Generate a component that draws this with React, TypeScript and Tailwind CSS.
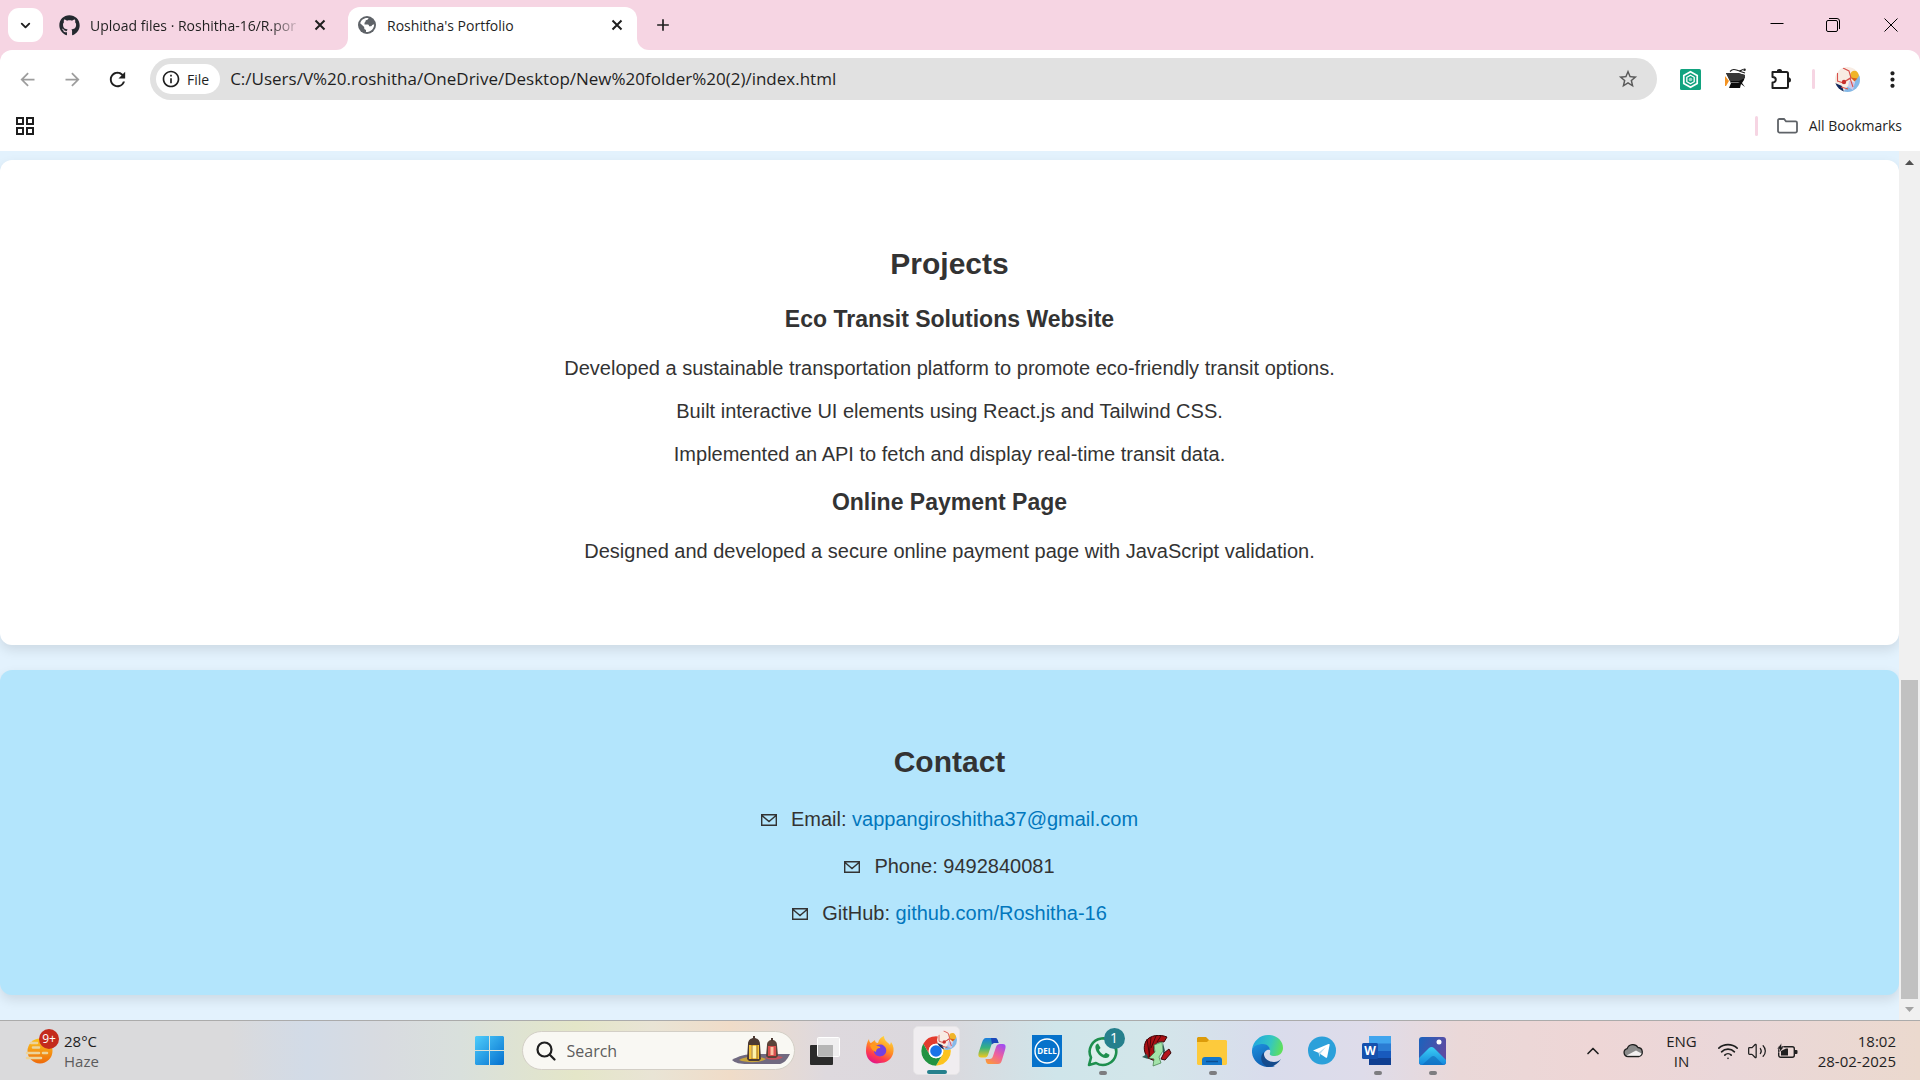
import React from "react";
import { ChevronDown, ChevronUp, Wifi, Volume2 } from "lucide-react";
import { FaGithub } from "react-icons/fa";
import {
  MdArrowBack,
  MdArrowForward,
  MdRefresh,
  MdOutlineInfo,
  MdStarBorder,
  MdMoreVert,
  MdAdd,
} from "react-icons/md";

function Cross() {
  return (
    <svg width="12" height="12" viewBox="0 0 12 12" stroke="#1f1f1f" strokeWidth="2">
      <path d="M1.500 1.500l9 9M10.500 1.500l-9 9" />
    </svg>
  );
}

function Globe() {
  return (
    <svg width="18" height="18" viewBox="0 0 18 18">
      <circle cx="9" cy="9" r="9" fill="#5f6368" />
      <path
        d="M10.500 2.100C10.500 3.600 9.300 4 7.800 4.200c-.5 1.300-.2 2.100-1.300 2.500v1.800H9.800c1 0 1.200.8 1.200 1.800h1.500c1 0 1.700-.6 1.700-1.500 1 0 1.700-.3 1.900-.8.300 3.200-1.800 6.700-5.500 7.700-.8.200-1.800.3-2.600.2v-2.200c-1 0-1.800-.8-1.800-1.800v-1L2.200 7.200C3 4 6.300 1.400 10.500 2.100z"
        fill="#fff"
      />
      <path d="M10.800 2.200c0 1.800-.6 2.500-2.500 2.800l-.3 1.600h3.200c.9 0 1.300.8 1.300 1.700l2 .3 1.700-.8C16 5.500 14 2.900 10.800 2.200z" fill="#5f6368" />
    </svg>
  );
}

function TabStrip() {
  return (
    <div className="flex h-[50px] items-end bg-[#f6d5e3] text-[#1f1f1f]">
      <div className="flex h-[50px] items-center pl-[8px]">
        <button aria-label="Search tabs" className="flex h-[34px] w-[35px] items-center justify-center rounded-[11px] bg-white">
          <ChevronDown size={15} strokeWidth={3} />
        </button>
      </div>
      <div className="flex h-[50px] w-[288px] items-center pl-[16px]">
        <FaGithub size={21} className="shrink-0 text-[#24292f]" />
        <span className="ml-[10px] w-[212px] whitespace-nowrap text-[14px] [mask-image:linear-gradient(to_right,black_85%,transparent)]">
          Upload files · Roshitha-16/R.por
        </span>
        <button aria-label="Close tab" className="ml-[12px]">
          <Cross />
        </button>
      </div>
      <div className="h-[12px] w-[17px] bg-white">
        <div className="h-[12px] w-[17px] rounded-br-[12px] bg-[#f6d5e3]" />
      </div>
      <div className="flex h-[43px] w-[289px] items-center rounded-t-[12px] bg-white pb-[8px] pl-[10px] pr-[14px] pt-[1px]">
        <Globe />
        <span className="ml-[11px] grow text-[14px]">Roshitha's Portfolio</span>
        <button aria-label="Close tab">
          <Cross />
        </button>
      </div>
      <div className="h-[12px] w-[12px] bg-white">
        <div className="h-[12px] w-[12px] rounded-bl-[12px] bg-[#f6d5e3]" />
      </div>
      <button aria-label="New tab" className="flex h-[50px] w-[28px] items-center justify-center">
        <MdAdd size={20} />
      </button>
      <div className="ml-auto flex h-[50px] items-center pr-[22px] text-black">
        <button aria-label="Minimize">
          <svg width="14" height="14" viewBox="0 0 14 14" stroke="currentColor">
            <path d="M0.500 5.500h13" />
          </svg>
        </button>
        <button aria-label="Restore" className="ml-[42px]">
          <svg width="14" height="14" viewBox="0 0 14 14" fill="none" stroke="currentColor">
            <rect x="0.500" y="2.500" width="11" height="11" rx="1.500" />
            <path d="M3 0.500H11A2.500 2.500 0 0 1 13.500 3v8" />
          </svg>
        </button>
        <button aria-label="Close window" className="ml-[44px]">
          <svg width="14" height="14" viewBox="0 0 14 14" stroke="currentColor">
            <path d="M0.500 0.500l13 13M13.500 0.500l-13 13" />
          </svg>
        </button>
      </div>
    </div>
  );
}

function Avatar({ size }: { size: number }) {
  return (
    <svg width={size} height={size} viewBox="0 0 25 25">
      <clipPath id={`avatar-${size}`}>
        <circle cx="12.500" cy="12.500" r="12.500" />
      </clipPath>
      <g clipPath={`url(#avatar-${size})`}>
        <rect width="25" height="25" fill="#f8ece3" />
        <path d="M19 5l6 4v16H8l4-5 8-4z" fill="#84b9e8" />
        <path d="M0 16l7 3 2 6H0z" fill="#13295c" />
        <path d="M14 14l6 1-2 8-5-3z" fill="#cdc8ea" />
        <circle cx="19.500" cy="8" r="4.300" fill="#f0b429" />
        <path d="M15.500 10.500l7 1-3 3z" fill="#d95f1e" />
        <path d="M2.500 6v8l6 2M8 1l6 3 2 7-7 4M9 15l6-4 3 9M6 20l7 2" fill="none" stroke="#d8504c" strokeWidth="1.100" />
        <circle cx="9" cy="15" r="2.200" fill="#c9302c" />
      </g>
    </svg>
  );
}

function Toolbar() {
  return (
    <div className="bg-[#f6d5e3]">
      <div className="flex h-[58px] items-center rounded-t-[12px] bg-white text-[#1f1f1f]">
        <button aria-label="Back" className="ml-[17px] text-[#9d9d9d]">
          <MdArrowBack size={21} />
        </button>
        <button aria-label="Forward" className="ml-[24px] text-[#9d9d9d]">
          <MdArrowForward size={21} />
        </button>
        <button aria-label="Reload" className="ml-[23px]">
          <MdRefresh size={23} />
        </button>
        <div className="ml-[21px] flex h-[42px] grow items-center rounded-full bg-[#e1e1e1] pl-[6px]">
          <button className="flex h-[30px] items-center rounded-full bg-white pl-[5px] pr-[11px] text-[14px] font-medium">
            <MdOutlineInfo size={20} />
            <span className="ml-[6px]">File</span>
          </button>
          <input
            aria-label="Address"
            readOnly
            value="C:/Users/V%20.roshitha/OneDrive/Desktop/New%20folder%20(2)/index.html"
            className="ml-[10px] min-w-0 grow bg-transparent text-[17px] outline-none"
          />
          <button aria-label="Bookmark this page" className="mr-[18px] text-[#5a5a5a]">
            <MdStarBorder size={22} />
          </button>
        </div>
        <button aria-label="ChatGPT extension" className="ml-[23px]">
          <svg width="21" height="21" viewBox="0 0 21 21" fill="none" stroke="white">
            <rect width="21" height="21" rx="1.500" fill="#12a37f" stroke="none" />
            <path d="M10.500 2.800l6.700 3.800v7.800l-6.700 3.800-6.700-3.800V6.600z" strokeWidth="1.700" />
            <path d="M10.500 6.200l3.700 2.100v4.400l-3.700 2.100-3.700-2.100V8.300z" strokeWidth="1.300" />
            <circle cx="10.500" cy="10.500" r="1.800" fill="white" fillOpacity="0.600" stroke="none" />
          </svg>
        </button>
        <button aria-label="Scholar extension" className="ml-[24px]">
          <svg width="22" height="22" viewBox="0 0 22 22">
            <path d="M0 8l4 5-3 5H0z" fill="#f39322" />
            <path d="M1 5h12l7 2-1 5-2 3 3 4-4-3-1 4H4l2-5-1-2z" fill="#0c0c0c" />
            <path d="M1 5h12l7 2v3l-6 3H5z" fill="#383838" />
            <path d="M5 14h10l-2 1H6z" fill="#777" />
            <path d="M5 3.500c3-3 5-2 8-1s3-.5 5-1M14 3l6 2" fill="none" stroke="#222" strokeWidth="1.100" />
            <circle cx="19.500" cy="1.800" r="1.300" fill="#222" />
          </svg>
        </button>
        <button aria-label="Extensions" className="ml-[23px]">
          <svg width="22" height="22" viewBox="0 0 22 22" fill="none" stroke="currentColor" strokeWidth="2" strokeLinejoin="round">
            <path d="M2.500 4h14a1.500 1.500 0 0 1 1.500 1.500v13a1.500 1.500 0 0 1-1.500 1.500h-14v-5.500a3 2.500 0 0 0 0-5.500z" />
            <path d="M7 3.500a2.500 2.500 0 0 1 5 0zM18.500 9.500a2.500 2.500 0 0 1 0 5z" fill="currentColor" stroke="none" />
            <path d="M7 1.800h4.500v2H7zM18 9.800h2v4h-2z" fill="currentColor" stroke="none" />
          </svg>
        </button>
        <span className="ml-[20px] h-[20px] w-[3px] rounded bg-[#f6d5e3]" />
        <button aria-label="Profile" className="ml-[20px]">
          <Avatar size={25} />
        </button>
        <button aria-label="Menu" className="ml-[20px] mr-[15px]">
          <MdMoreVert size={25} />
        </button>
      </div>
    </div>
  );
}

function BookmarksBar() {
  return (
    <div className="flex h-[43px] items-center bg-white pb-[8px] pl-[16px] pr-[18px] text-[#1f1f1f]">
      <button aria-label="Apps">
        <svg width="18" height="18" viewBox="0 0 18 18" fill="none" stroke="currentColor" strokeWidth="2">
          <path d="M1 1h6v6H1zM11 1h6v6h-6zM1 11h6v6H1zM11 11h6v6h-6z" />
        </svg>
      </button>
      <span className="ml-auto h-[20px] w-[3px] rounded bg-[#f6d5e3]" />
      <button className="ml-[19px] flex items-center text-[14px]">
        <svg width="21" height="16" viewBox="0 0 21 16" fill="none" stroke="#5f6368" strokeWidth="1.800">
          <path d="M1 13V2.500A1.400 1.400 0 0 1 2.400 1H7l2 2.300h9.600A1.400 1.400 0 0 1 20 4.700V13a1.700 1.700 0 0 1-1.700 1.700H2.700A1.700 1.700 0 0 1 1 13z" />
        </svg>
        <span className="ml-[11px]">All Bookmarks</span>
      </button>
    </div>
  );
}

function Envelope() {
  return (
    <svg width="16" height="12" viewBox="0 0 16 12" fill="none" stroke="#333" strokeWidth="1.400">
      <path d="M0.700 0.700h14.600v10.600H0.700zM1 1.500l7 6 7-6" />
    </svg>
  );
}

const contacts = [
  { label: "Email:", value: "vappangiroshitha37@gmail.com", href: "mailto:vappangiroshitha37@gmail.com" },
  { label: "Phone:", value: "9492840081" },
  { label: "GitHub:", value: "github.com/Roshitha-16", href: "https://github.com/Roshitha-16" },
];

function Page() {
  return (
    <div className="flex grow bg-[#e3f2fd]">
      <main className="flex grow flex-col gap-[25px] pb-[25px] pt-[9px] text-center font-['Liberation_Sans',Arial,sans-serif] text-[20px] leading-[23px] text-[#333]">
        <section className="flex flex-col rounded-[12px] bg-white pb-[82px] pt-[87px] shadow-[0_5px_12px_rgba(0,0,0,0.1)]">
          <h2 className="text-[30px] font-bold leading-[34px]">Projects</h2>
          <h3 className="mt-[25px] text-[23px] font-bold leading-[27px]">Eco Transit Solutions Website</h3>
          <div className="mt-[24px] flex flex-col gap-[20px]">
            <p>Developed a sustainable transportation platform to promote eco-friendly transit options.</p>
            <p>Built interactive UI elements using React.js and Tailwind CSS.</p>
            <p>Implemented an API to fetch and display real-time transit data.</p>
          </div>
          <h3 className="mt-[23px] text-[23px] font-bold leading-[27px]">Online Payment Page</h3>
          <p className="mt-[24px]">Designed and developed a secure online payment page with JavaScript validation.</p>
        </section>
        <section className="flex flex-col rounded-[12px] bg-[#b3e5fc] pb-[70px] pt-[75px] shadow-[0_5px_12px_rgba(0,0,0,0.1)]">
          <h2 className="text-[30px] font-bold leading-[34px]">Contact</h2>
          <ul className="mt-[29px] flex flex-col gap-[24px]">
            {contacts.map((c) => (
              <li key={c.label} className="flex items-center justify-center">
                <Envelope />
                <span className="ml-[14px]">
                  {c.label}{" "}
                  {c.href ? (
                    <a href={c.href} className="text-[#0277bd]">
                      {c.value}
                    </a>
                  ) : (
                    c.value
                  )}
                </span>
              </li>
            ))}
          </ul>
        </section>
      </main>
      <div className="flex w-[21px] shrink-0 flex-col items-center bg-[#f0f0f0] pb-[8px] pt-[9px]">
        <svg width="9" height="5" viewBox="0 0 9 5" fill="#505050">
          <path d="M4.500 0L9 5H0z" />
        </svg>
        <div className="mt-auto h-[319px] w-[17px] bg-[#c1c1c1]" />
        <svg className="mt-[8px]" width="9" height="5" viewBox="0 0 9 5" fill="#a3a3a3">
          <path d="M0 0h9L4.500 5z" />
        </svg>
      </div>
    </div>
  );
}

function WeatherIcon() {
  return (
    <svg width="34" height="44" viewBox="0 0 34 44">
      <defs>
        <linearGradient id="sun" x1="0" y1="0" x2="0" y2="1">
          <stop offset="0" stopColor="#fcc41c" />
          <stop offset="1" stopColor="#ee6a0c" />
        </linearGradient>
      </defs>
      <circle cx="15" cy="22" r="12.500" fill="url(#sun)" />
      <g stroke="#ecd49a" strokeWidth="2.600" strokeLinecap="round">
        <path d="M6 14h6M8 18.500h6M2 24h12M18 24h4M2 29h14" />
      </g>
      <circle cx="24" cy="10" r="10" fill="#c42b1c" />
      <text x="24" y="14" textAnchor="middle" fontSize="12" fill="white">
        9+
      </text>
    </svg>
  );
}

function StartIcon() {
  return (
    <svg width="29" height="29" viewBox="0 0 29 29">
      <defs>
        <linearGradient id="win" x1="0" y1="0" x2="1" y2="1">
          <stop offset="0" stopColor="#4fcdfb" />
          <stop offset="1" stopColor="#0470cf" />
        </linearGradient>
      </defs>
      <path d="M1 0h13v14H0V1zM15 0h13l1 1v13H15zM0 15h14v14H1l-1-1zM15 15h14v13l-1 1H15z" fill="url(#win)" />
    </svg>
  );
}

function Lanterns() {
  return (
    <svg className="shrink-0" width="60" height="30" viewBox="0 0 60 30">
      <path d="M1 24c6-4 14-6 24-6h34c-3 6-6 9-10 10H16c-7 0-12-1-15-4z" fill="#716a80" />
      <path d="M8 24c6-4 20-5 27-1-5 4-20 4-27 1z" fill="#c9a53c" />
      <path d="M34 22c6-3 14-2 18-1-3 3-12 4-18 1z" fill="#c8545c" />
      <path d="M17 8c0-4 3-6 6-6s6 2 6 6l1 15-2 2H18l-2-2z" fill="#4c3a33" />
      <path d="M18 9h10v14H18z" fill="#f6c33a" />
      <path d="M20.500 10h5v12h-5z" fill="#fff2a8" />
      <path d="M21 9v14M26 9v14" stroke="#8b5a1c" strokeWidth="0.800" />
      <path d="M36 9c0-3 2-5 5-5s5 2 5 5l1 11-2 2h-8l-2-2z" fill="#5b4339" />
      <path d="M37 10h8v10h-8z" fill="#d9514e" />
      <path d="M39.500 11h3v8h-3z" fill="#fbc2a4" />
      <path d="M23 0v3M41 2v3" stroke="#4c3a33" strokeWidth="2" />
    </svg>
  );
}

function TaskView() {
  return (
    <svg width="30" height="28" viewBox="0 0 30 28">
      <rect y="8" width="23" height="20" rx="1" fill="#2b2b2b" />
      <rect x="7.500" y="0.500" width="22" height="19" rx="1" fill="#f4f4f4" fillOpacity="0.820" stroke="#fff" />
      <rect x="8" y="8" width="15" height="12" fill="#a9a9a9" fillOpacity="0.650" />
    </svg>
  );
}

function Firefox() {
  return (
    <svg width="30" height="30" viewBox="0 0 30 30">
      <defs>
        <linearGradient id="ff" x1="0.800" y1="0" x2="0.300" y2="1">
          <stop offset="0" stopColor="#ffe141" />
          <stop offset="0.450" stopColor="#ff9022" />
          <stop offset="0.750" stopColor="#ff3c4d" />
          <stop offset="1" stopColor="#e31587" />
        </linearGradient>
      </defs>
      <path d="M4 3c0 2 1 4 2 4l4-3c0 2 1 3 3 3 1-4 3-6 6-7 0 5 4 6 6 9l1-3c3 4 3 8 2 12-2 6-7 9-13 9C7 29 1 23 1 15 1 10 2 6 4 3z" fill="url(#ff)" />
      <path d="M9 12c2-3 7-5 10-2 3 2 3 7 0 9-4 3-9 1-10-3z" fill="#7540e0" />
      <path d="M5 9c3-2 5-1 7 1 2 0 4 1 3 2-3 0-4 2-4 4-3-1-5-3-6-7z" fill="#ff9a1f" />
    </svg>
  );
}

function Chrome() {
  return (
    <span className="relative">
      <svg width="32" height="32" viewBox="0 0 48 48">
        <circle cx="24" cy="24" r="22" fill="#fff" />
        <path d="M24 13h19.100A22 22 0 0 0 4.950 13l9.550 16.500A11 11 0 0 1 24 13z" fill="#e33b2e" />
        <path d="M33.500 29.500L24 46A22 22 0 0 0 43.100 13H24a11 11 0 0 1 9.500 16.500z" fill="#fcc31e" />
        <path d="M14.500 29.500L4.950 13A22 22 0 0 0 24 46l9.500-16.500a11 11 0 0 1-19 0z" fill="#229342" />
        <circle cx="24" cy="24" r="11" fill="#fff" />
        <circle cx="24" cy="24" r="8.700" fill="#1a73e8" />
      </svg>
      <span className="absolute -top-[5px] left-[17px]">
        <Avatar size={20} />
      </span>
    </span>
  );
}

function Copilot() {
  return (
    <svg width="28" height="28" viewBox="0 0 28 28">
      <defs>
        <linearGradient id="cp1" x1="0" y1="0" x2="0" y2="1">
          <stop offset="0" stopColor="#1b7de0" />
          <stop offset="0.500" stopColor="#36b37e" />
          <stop offset="1" stopColor="#f3c81c" />
        </linearGradient>
        <linearGradient id="cp2" x1="0.800" y1="0" x2="0.200" y2="1">
          <stop offset="0" stopColor="#a24df0" />
          <stop offset="0.500" stopColor="#f0609a" />
          <stop offset="1" stopColor="#fb9a3c" />
        </linearGradient>
      </defs>
      <path d="M8 1h9c2 0 3 2 3.500 5h-4c-2 0-3 1-3.500 3l-3 9c-.6 2-2 2.500-4 2.500H3c-3 0-3-3-2-6l3-9C5 2.500 6 1 8 1z" fill="url(#cp1)" />
      <path d="M20 27h-9c-2 0-3-1-3.500-5h4c2 0 3-1 3.500-3l3-9c.6-2 2-3 4-3H25c3 0 3 3 2 6l-3 10c-1 3-2 4-4 4z" fill="url(#cp2)" />
      <path d="M13 1h4c2 0 3 2 3.500 5h-4c-1 0-2 .5-2.500 1.500z" fill="#1b46b8" />
    </svg>
  );
}

function Dell() {
  return (
    <svg width="30" height="32" viewBox="0 0 30 32">
      <rect width="30" height="32" fill="#0672cb" />
      <circle cx="15" cy="16" r="12" fill="none" stroke="white" strokeWidth="1.400" />
      <text x="15" y="19" textAnchor="middle" fontSize="8" fontWeight="700" fill="white">
        DELL
      </text>
    </svg>
  );
}

function WhatsApp() {
  return (
    <span className="relative">
      <svg width="31" height="32" viewBox="0 0 31 32">
        <path d="M2 30l2-7.500A13.300 13.300 0 1 1 9 28z" fill="#e9f7f0" fillOpacity="0.500" stroke="#1e8f4e" strokeWidth="2.600" strokeLinejoin="round" />
        <path d="M11 8.500c-1.600.3-2.800 1.800-2.600 4C9 18 14 22.500 18.500 23c2 .2 4-1 4-3.200l-3.600-2-2 2c-2.400-1-4-2.600-5-5l1.700-1.800z" fill="#1e8f4e" />
      </svg>
      <span className="absolute -top-[7px] left-[17px] flex h-[21px] w-[21px] items-center justify-center rounded-full bg-[#26808d] text-[14px] leading-none text-white">
        1
      </span>
    </span>
  );
}

function Dragon() {
  return (
    <svg width="30" height="32" viewBox="0 0 30 32">
      <path d="M4 6C8 0 18-1 25 2l-3 5c-5-1-9 1-10 5s1 7 3 8l-2 6-7-3C2 18 1 12 4 6z" fill="#a90f14" stroke="#3a0608" strokeWidth="1" />
      <path d="M22 18l5-4 2 4-6 7-4-1z" fill="#b5161c" stroke="#3a0608" />
      <path d="M5 4l3 20M9 2l-2 20M14 1l-5 12M19 1l-4 6" stroke="#4b0508" strokeWidth="1" />
      <path d="M12 10l8-3 1 9-4 6 2 6-8 3 1-7-5-1 6-6z" fill="#a3e3a9" stroke="#3f7a49" strokeWidth="0.700" />
      <path d="M0 22l5-3 1 5zM21 8l2 8-2 3z" fill="#2c5d57" />
    </svg>
  );
}

function Explorer() {
  return (
    <svg width="30" height="28" viewBox="0 0 30 28">
      <path d="M1 0h8l3 3v4H0V1z" fill="#dc9b0a" />
      <path d="M0 5h10l2-2h17l1 1v23l-1 1H1l-1-1z" fill="#fdca3c" />
      <path d="M5 28v-5c0-2 1-3 3-3h14c2 0 3 1 3 3v5z" fill="#1477cb" />
      <path d="M9 24.500h12" stroke="#0b4f92" strokeWidth="1.500" />
    </svg>
  );
}

function Edge() {
  return (
    <svg width="31" height="32" viewBox="0 0 31 32">
      <defs>
        <linearGradient id="edge1" x1="0" y1="0.300" x2="1" y2="0.500">
          <stop offset="0" stopColor="#1fa5e2" />
          <stop offset="0.600" stopColor="#35c7c0" />
          <stop offset="1" stopColor="#5fe05a" />
        </linearGradient>
        <linearGradient id="edge2" x1="0" y1="0" x2="0.500" y2="1">
          <stop offset="0" stopColor="#1f93e0" />
          <stop offset="1" stopColor="#0f5cb0" />
        </linearGradient>
      </defs>
      <path d="M0 15C1 6 8 0 16 0c9 0 15 6 15 13 0 5-4 8-8 8-4 0-6-1-5-3 1-3-1-8-7-8-5 0-10 2-11 5z" fill="url(#edge1)" />
      <path d="M0 15c1-4 6-6 11-6 4 0 7 3 7 6-4-1-7 3-6 7 1 5 6 8 11 9-10 4-24-3-23-16z" fill="url(#edge2)" />
      <path d="M12 17c-1 6 4 10 10 10 3 0 5-1 7-3-3 5-8 8-13 8-7-2-9-11-4-15z" fill="#154b8c" />
    </svg>
  );
}

function Telegram() {
  return (
    <svg width="28" height="29" viewBox="0 0 28 29">
      <circle cx="14" cy="14.500" r="14" fill="#2ba0da" />
      <path d="M5 14.500L20.500 8c.8-.3 1.300.2 1.100 1l-2.400 12c-.2.900-.8 1.100-1.600.6L10.500 16.800z" fill="#fff" />
      <path d="M10.500 16.800l7.500-6-5.800 7.300-.7 3.200z" fill="#b6dcf0" />
    </svg>
  );
}

function Word() {
  return (
    <svg width="30" height="30" viewBox="0 0 30 30">
      <rect x="7" y="0" width="22" height="8" fill="#41a5ee" />
      <rect x="7" y="7.500" width="22" height="8" fill="#2b7cd3" />
      <rect x="7" y="15" width="22" height="8" fill="#185abd" />
      <rect x="7" y="22" width="22" height="7" fill="#103f91" />
      <rect x="0" y="7" width="16" height="16" rx="1.500" fill="#1450ad" />
      <text x="8" y="19" textAnchor="middle" fontSize="12" fontWeight="700" fill="white">
        W
      </text>
    </svg>
  );
}

function Photos() {
  return (
    <svg width="27" height="28" viewBox="0 0 27 28">
      <defs>
        <linearGradient id="ph" x1="0" y1="0" x2="1" y2="0.400">
          <stop offset="0" stopColor="#1a63bd" />
          <stop offset="1" stopColor="#5d4ba3" />
        </linearGradient>
        <linearGradient id="ph2" x1="0" y1="0" x2="0" y2="1">
          <stop offset="0" stopColor="#3bd0f5" />
          <stop offset="1" stopColor="#1486dc" />
        </linearGradient>
      </defs>
      <rect width="27" height="28" rx="3" fill="url(#ph)" />
      <path d="M0 21l10-10c1.500-1.500 3.500-1.500 5 0l12 12v2c0 2-1 3-3 3H3c-2 0-3-1-3-3z" fill="url(#ph2)" />
      <path d="M3 28l9-8c1.500-1.300 3-1.300 4.500 0l8 8z" fill="#0f62b5" fillOpacity="0.550" />
      <circle cx="20" cy="5" r="2.500" fill="#fff" />
    </svg>
  );
}

const apps = [
  { name: "Task view", icon: <TaskView />, mark: "" },
  { name: "Firefox", icon: <Firefox />, mark: "" },
  { name: "Chrome", icon: <Chrome />, mark: "active" },
  { name: "Copilot", icon: <Copilot />, mark: "" },
  { name: "Dell", icon: <Dell />, mark: "" },
  { name: "WhatsApp", icon: <WhatsApp />, mark: "open" },
  { name: "Dragon", icon: <Dragon />, mark: "" },
  { name: "File Explorer", icon: <Explorer />, mark: "open" },
  { name: "Edge", icon: <Edge />, mark: "" },
  { name: "Telegram", icon: <Telegram />, mark: "" },
  { name: "Word", icon: <Word />, mark: "open" },
  { name: "Photos", icon: <Photos />, mark: "open" },
];

function Taskbar() {
  return (
    <footer className="grid h-[60px] shrink-0 grid-cols-[1fr_auto_1fr] items-center border-t border-[#ababab] bg-[linear-gradient(to_right,#dadadc_0%,#dadadc_12%,#d2dbe7_16%,#d8dbe0_20%,#d9e0dc_24%,#e4e6c8_30%,#e9e4d5_34%,#f0dcc8_38%,#ded9de_43%,#dbd8dd_49%,#cfe5ea_55%,#d3e6ea_60%,#d9dcec_66%,#dedcea_71%,#ead8d8_76%,#eed6d6_83%,#ead7d9_90%,#ebd9ce_100%)] text-[#1f1f1f]">
      <button className="flex items-center pl-[25px] text-left text-[15px] leading-[20px]">
        <WeatherIcon />
        <span className="ml-[5px] flex flex-col">
          <span>28°C</span>
          <span className="text-[#5c5c5c]">Haze</span>
        </span>
      </button>
      <div className="flex items-center pl-[14px]">
        <button aria-label="Start">
          <StartIcon />
        </button>
        <label className="ml-[18px] mr-[3px] flex h-[39px] w-[273px] items-center rounded-full border border-[#d3cfc6] bg-[#f9f8f3] pl-[13px] pr-[3px]">
          <svg className="shrink-0" width="20" height="20" viewBox="0 0 20 20" fill="none" stroke="#1f1f1f" strokeWidth="2.200" strokeLinecap="round">
            <circle cx="8.500" cy="8.500" r="7" />
            <path d="M13.800 13.800l4.700 4.700" />
          </svg>
          <input aria-label="Search" placeholder="Search" className="ml-[11px] min-w-0 grow bg-transparent text-[16px] outline-none placeholder:text-[#5d5d5d]" />
          <Lanterns />
        </label>
        {apps.map((a) => (
          <button
            key={a.name}
            aria-label={a.name}
            className={
              a.mark === "active"
                ? "relative mx-[5px] flex h-[49px] w-[47px] items-center justify-center rounded-[5px] border border-[#e6e4e6] bg-[#f0edf0]"
                : "relative mx-[4px] flex h-[49px] w-[47px] items-center justify-center"
            }
          >
            {a.icon}
            {a.mark === "active" && <span className="absolute bottom-0 left-[13px] h-[4px] w-[20px] rounded-full bg-[#26808d]" />}
            {a.mark === "open" && <span className="absolute bottom-0 left-[20px] h-[4px] w-[8px] rounded-full bg-[#7d7d80]" />}
          </button>
        ))}
      </div>
      <div className="flex items-center justify-end pr-[24px] text-[15px] leading-[20px]">
        <ChevronUp size={20} strokeWidth={2} />
        <svg className="ml-[20px]" width="21" height="15" viewBox="0 0 21 15">
          <path d="M5 13.500a4 4 0 0 1-.8-7.900A6 6 0 0 1 15 4.500a4.600 4.600 0 0 1 1 9z" fill="#8b8b8b" stroke="#1f1f1f" strokeWidth="1.300" />
          <path d="M3.500 12.600L13 7.500l5.500 3c-.5 1.600-1.500 2.300-3 2.300H5z" fill="#f3f0f0" />
        </svg>
        <span className="ml-[22px] text-center">
          ENG
          <br />
          IN
        </span>
        <Wifi className="ml-[20px]" size={22} strokeWidth={1.800} />
        <Volume2 className="ml-[8px]" size={20} strokeWidth={1.500} />
        <svg className="ml-[10px]" width="21" height="16" viewBox="0 0 21 16">
          <rect x="1.700" y="3.700" width="15.600" height="10.600" rx="2" fill="none" stroke="#1f1f1f" strokeWidth="1.400" />
          <path d="M18 7h1.500a1 1 0 0 1 1 1v2a1 1 0 0 1-1 1H18z" fill="#1f1f1f" />
          <path d="M4 12.500V8l5-2.500h2v7z" fill="#1f1f1f" />
          <path d="M4.500 0L0 6h2.500L2 10l5-6H4.500z" fill="#1f1f1f" stroke="#ecd7d9" strokeWidth="0.500" />
        </svg>
        <span className="ml-[20px] text-right">
          18:02
          <br />
          28-02-2025
        </span>
      </div>
    </footer>
  );
}

export default function App() {
  return (
    <div className="flex min-h-screen flex-col font-['Open_Sans','Noto_Sans',sans-serif]">
      <TabStrip />
      <Toolbar />
      <BookmarksBar />
      <Page />
      <Taskbar />
    </div>
  );
}
